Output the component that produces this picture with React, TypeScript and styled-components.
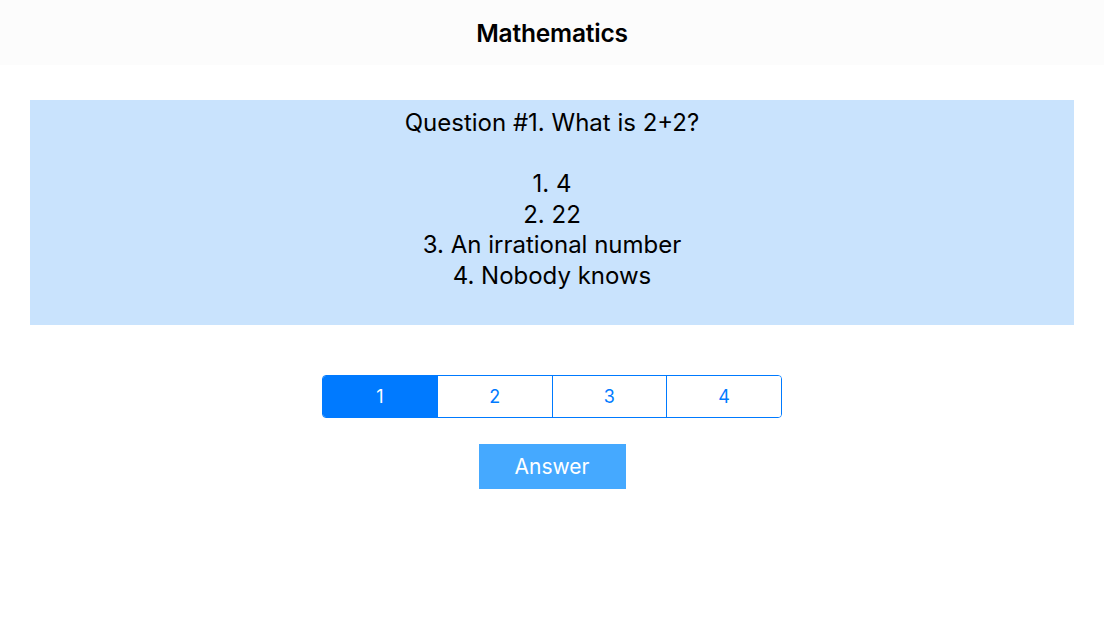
import React, { useState } from "react";
import styled, { createGlobalStyle } from "styled-components";

const GlobalStyle = createGlobalStyle`
  html, body {
    margin: 0;
    padding: 0;
    background: #ffffff;
    font-family: Inter, "Noto Sans", sans-serif;
  }
`;

const Page = styled.div`
  width: 1104px;
  height: 621px;
  display: flex;
  flex-direction: column;
  align-items: center;
`;

const NavBar = styled.header`
  align-self: stretch;
  height: 65px;
  background-color: #fcfcfc;
  display: flex;
  align-items: center;
  justify-content: center;
`;

const Title = styled.h1`
  margin: 0;
  font-size: 24.5px;
  font-weight: 600;
  color: #000;
  letter-spacing: -0.2px;
`;

const QuestionBox = styled.div`
  align-self: stretch;
  margin: 35px 30px 0;
  height: 225px;
  box-sizing: border-box;
  padding-top: 8px;
  background-color: #c9e3fd;
  text-align: center;
  font-size: 24px;
  line-height: 30.6px;
  color: #000;
  white-space: pre-line;
`;

const Segments = styled.div`
  margin-top: 50px;
  display: flex;
  width: 460px;
  height: 43px;
  box-sizing: border-box;
  border: 1px solid #007aff;
  border-radius: 4px;
  overflow: hidden;
`;

const Segment = styled.button<{ $active: boolean }>`
  flex: 1;
  border: none;
  border-left: 1px solid #007aff;
  margin: 0;
  padding: 0;
  font-family: inherit;
  font-size: 18px;
  color: ${(p) => (p.$active ? "#ffffff" : "#007aff")};
  background-color: ${(p) => (p.$active ? "#007aff" : "#ffffff")};
  cursor: pointer;

  &:first-child {
    border-left: none;
  }
`;

const AnswerButton = styled.button`
  margin-top: 26px;
  width: 147px;
  height: 45px;
  border: none;
  background-color: #45a9ff;
  color: #ffffff;
  font-family: inherit;
  font-size: 21px;
  cursor: pointer;
`;

const question = `Question #1. What is 2+2?

1. 4
2. 22
3. An irrational number
4. Nobody knows`;

export default function App() {
  const [selected, setSelected] = useState(0);

  return (
    <Page>
      <GlobalStyle />
      <NavBar>
        <Title>Mathematics</Title>
      </NavBar>
      <QuestionBox>{question}</QuestionBox>
      <Segments>
        {[1, 2, 3, 4].map((n, i) => (
          <Segment key={n} $active={selected === i} onClick={() => setSelected(i)}>
            {n}
          </Segment>
        ))}
      </Segments>
      <AnswerButton>Answer</AnswerButton>
    </Page>
  );
}
